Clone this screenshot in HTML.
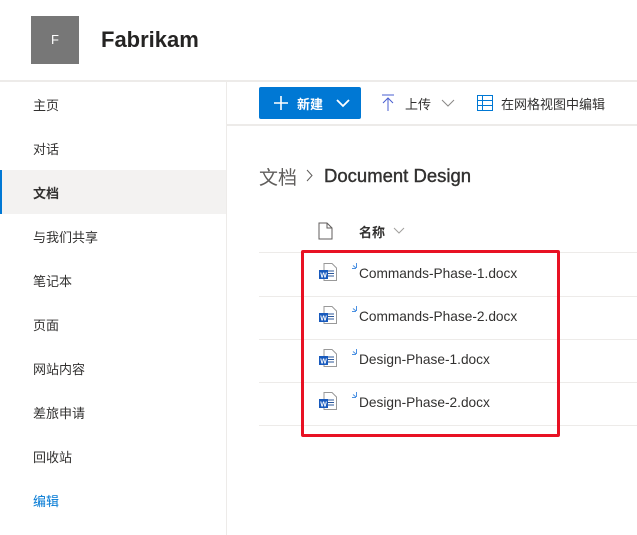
<!DOCTYPE html>
<html><head><meta charset="utf-8"><style>
*{margin:0;padding:0;box-sizing:border-box}
body{width:637px;height:535px;overflow:hidden;background:#fff;font-family:"Liberation Sans","Noto Sans CJK SC",sans-serif;color:#323130;position:relative}
.a{position:absolute;white-space:nowrap}
.nav{left:33px;font-size:13px;color:#323130}
.row{left:259px;width:378px;height:1px;background:#edebe9}
.fn{left:359px;font-size:13.7px;color:#323130}
</style></head><body>
<div class="a" style="left:31px;top:16px;width:48px;height:48px;background:#777;color:#fff;font-size:13px;text-align:center;line-height:48px">F</div>
<div class="a" style="left:101px;top:27px;font-size:22px;color:#252423;font-weight:600">Fabrikam</div>
<div class="a" style="left:0;top:80px;width:637px;height:2px;background:#edebe9"></div>
<div class="a" style="left:226px;top:82px;width:1px;height:453px;background:#edebe9"></div>
<div class="a nav" style="top:95px">主页</div>
<div class="a nav" style="top:139px">对话</div>
<div class="a" style="left:0;top:170px;width:226px;height:44px;background:#f3f2f1;border-left:2px solid #0078d4"></div>
<div class="a nav" style="top:183px;font-weight:bold">文档</div>
<div class="a nav" style="top:227px">与我们共享</div>
<div class="a nav" style="top:271px">笔记本</div>
<div class="a nav" style="top:315px">页面</div>
<div class="a nav" style="top:359px">网站内容</div>
<div class="a nav" style="top:403px">差旅申请</div>
<div class="a nav" style="top:447px">回收站</div>
<div class="a nav" style="top:491px;color:#0078d4">编辑</div>
<div class="a" style="left:259px;top:87px;width:102px;height:32px;background:#0078d4;border-radius:2px;color:#fff;font-size:13px;font-weight:bold">
<svg class="a" style="left:14px;top:8px" width="16" height="16"><path d="M8 1v14M1 8h14" stroke="#fff" stroke-width="1.6"/></svg>
<span class="a" style="left:38px;top:7px">新建</span>
<svg class="a" style="left:77px;top:11px" width="14" height="10"><path d="M1 2l6 6 6-6" stroke="#fff" stroke-width="1.8" fill="none"/></svg></div>
<svg class="a" style="left:381px;top:94px" width="14" height="18"><path d="M1 1h12M7 4v13M2 9l5-5 5 5" stroke="#4a5fd0" stroke-width="1" fill="none"/></svg>
<div class="a" style="left:405px;top:94px;font-size:13px">上传</div>
<svg class="a" style="left:441px;top:98px" width="14" height="10"><path d="M1 2l6 6 6-6" stroke="#8a8886" stroke-width="1" fill="none"/></svg>
<svg class="a" style="left:477px;top:95px" width="16" height="16"><path d="M.5 .5h15v15H.5zM.5 5.5h15M.5 10.5h15M5.5 .5v15" stroke="#0078d4" stroke-width="1" fill="none"/></svg>
<div class="a" style="left:501px;top:94px;font-size:13px">在网格视图中编辑</div>
<div class="a" style="left:227px;top:124px;width:410px;height:2px;background:#edebe9"></div>
<div class="a" style="left:259px;top:163px;font-size:19px;color:#605e5c">文档</div>
<svg class="a" style="left:306px;top:169px" width="8" height="13"><path d="M1 1l5 5.5L1 12" stroke="#605e5c" stroke-width="1" fill="none"/></svg>
<div class="a" style="left:324px;top:165px;font-size:18.5px;color:#323130;-webkit-text-stroke:0.4px #323130">Document Design</div>
<svg class="a" style="left:318px;top:222px" width="15" height="18"><path d="M1 1h8l5 5v11H1z M9 1v5h5" stroke="#605e5c" stroke-width="1" fill="none"/></svg>
<div class="a" style="left:359px;top:222px;font-size:13px;font-weight:bold">名称</div>
<svg class="a" style="left:393px;top:227px" width="12" height="8"><path d="M1 1l5 5 5-5" stroke="#a19f9d" stroke-width="1" fill="none"/></svg>
<div class="a row" style="top:252px"></div>
<div class="a row" style="top:296px"></div>
<div class="a row" style="top:339px"></div>
<div class="a row" style="top:382px"></div>
<div class="a row" style="top:425px"></div>
<div class="a fn" style="top:266px">Commands-Phase-1.docx</div>
<div class="a fn" style="top:309px">Commands-Phase-2.docx</div>
<div class="a fn" style="top:352px">Design-Phase-1.docx</div>
<div class="a fn" style="top:395px">Design-Phase-2.docx</div>
<svg class="a" style="left:318px;top:260px" width="44" height="160">
<defs><g id="w"><path d="M6 .5h8l4.5 4.5v12.5h-12.5z" fill="#fff" stroke="#999"/><path d="M10 8h6M10 10.5h6M10 13h6" stroke="#2b579a"/><rect x="1" y="7" width="9" height="9" fill="#185abd"/><text x="5.5" y="14.5" font-size="7" fill="#fff" text-anchor="middle" font-family="Liberation Sans" font-weight="bold">W</text>
<path d="M35 2.5l3 2.5M38.5 0v5M34 5.5h4" stroke="#4a90e2" stroke-width="1" fill="none"/></g></defs>
<use href="#w" y="3"/><use href="#w" y="46"/><use href="#w" y="89"/><use href="#w" y="132"/>
</svg>
<div class="a" style="left:301px;top:250px;width:259px;height:187px;border:3px solid #e81123;border-radius:2px"></div>
</body></html>
